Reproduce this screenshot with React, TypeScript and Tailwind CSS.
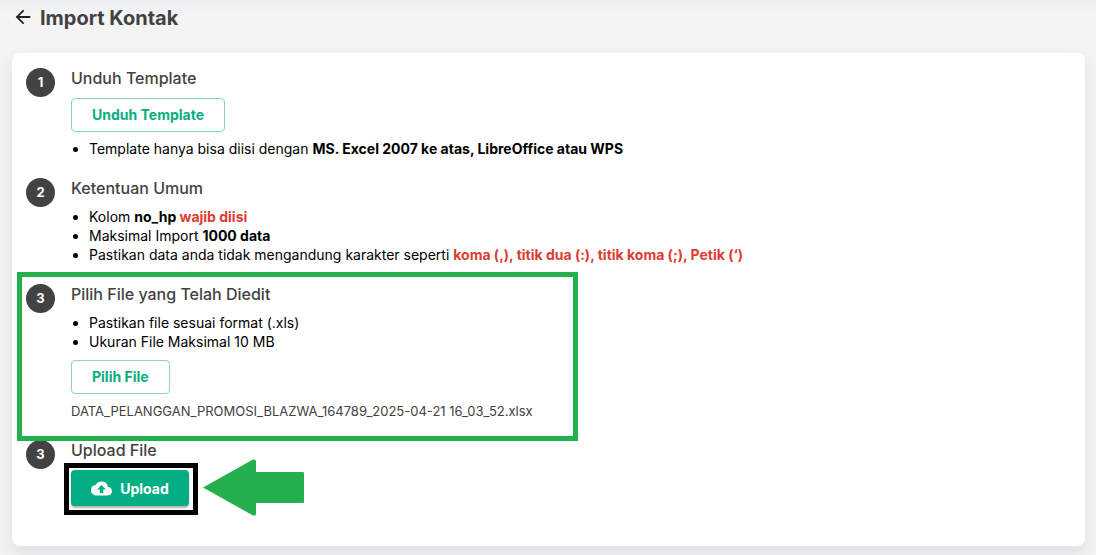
import React from 'react'
import { MdArrowBack, MdCloudUpload } from 'react-icons/md'

type StepProps = {
    number: number;
    title: string;
    children: React.ReactNode;
};

const Step: React.FC<StepProps> = ({ number, title, children }) => {
    return (
        <li className="relative flex gap-4 pb-[17px]">
            <span className="mt-0.5 flex size-[29px] shrink-0 items-center justify-center rounded-full bg-[#424242] text-[13px] font-bold text-white">
                {number}
            </span>
            <div className="flex min-w-0 flex-col items-start gap-2">
                <h2 className="text-[16px] leading-6 font-medium text-[#424242]">{title}</h2>
                {children}
            </div>
        </li>
    );
};

const Rules: React.FC<{ children: React.ReactNode }> = ({ children }) => {
    return <ul className="-mt-px list-disc pb-px pl-[18px] text-[14px] leading-[19px] text-black">{children}</ul>;
};

const OutlineButton: React.FC<{ children: React.ReactNode }> = ({ children }) => {
    return (
        <button type="button" className="h-[34px] rounded border border-[#82d7c1] bg-white px-5 pb-0.5 text-[14px] font-bold text-[#05ae82]">
            {children}
        </button>
    );
};

export default function App() {
    return (
        <div className="min-h-screen bg-[#f4f4f4] bg-linear-to-b from-[#ebedf0] to-[#f4f4f4] to-[14px] pr-[11px] pb-[9px] pl-3 font-['Inter',sans-serif]">
            <header className="flex h-[53px] items-start gap-1.5 pt-1.5">
                <a href="#kontak" aria-label="Kembali" className="text-[#222222]">
                    <MdArrowBack size={22} />
                </a>
                <h1 className="text-[20px] leading-6 font-bold text-[#424242]">Import Kontak</h1>
            </header>

            <main className="rounded-[8px] bg-white px-3.5 pt-[13px] pb-[23px] shadow-[0_8px_18px_rgba(60,75,90,0.12)]">
                <ol>
                    <Step number={1} title="Unduh Template">
                        <OutlineButton>Unduh Template</OutlineButton>
                        <Rules>
                            <li>Template hanya bisa diisi dengan <b>MS. Excel 2007 ke atas, LibreOffice atau WPS</b></li>
                        </Rules>
                    </Step>

                    <Step number={2} title="Ketentuan Umum">
                        <Rules>
                            <li>Kolom <b>no_hp <span className="text-[#dd3c30]">wajib diisi</span></b></li>
                            <li>Maksimal Import <b>1000 data</b></li>
                            <li>Pastikan data anda tidak mengandung karakter seperti <b className="text-[#dd3c30]">koma (,), titik dua (:), titik koma (;), Petik (‘)</b></li>
                        </Rules>
                    </Step>

                    <Step number={3} title="Pilih File yang Telah Diedit">
                        <Rules>
                            <li>Pastikan file sesuai format (.xls)</li>
                            <li>Ukuran File Maksimal 10 MB</li>
                        </Rules>
                        <OutlineButton>Pilih File</OutlineButton>
                        <p className="text-[13px] leading-[19px] text-[#424242]">DATA_PELANGGAN_PROMOSI_BLAZWA_164789_2025-04-21 16_03_52.xlsx</p>
                        {/* highlight frame */}
                        <div className="pointer-events-none absolute -top-2.5 -left-[9px] z-10 h-[169px] w-[561px] border-5 border-[#24b14d]" />
                    </Step>

                    <Step number={3} title="Upload File">
                        <div className="relative">
                            <button type="button" className="flex h-9 w-[118px] items-center justify-center gap-2 rounded bg-[#05ae82] text-[14px] font-bold text-white shadow-[0_2px_2px_rgba(0,0,0,0.3)]">
                                <MdCloudUpload size={21} />
                                Upload
                            </button>
                            <div className="pointer-events-none absolute -top-[7px] -left-[7px] h-[52px] w-[134px] border-5 border-black" />
                            <svg className="absolute -top-[11px] left-[132px]" width="101" height="57" viewBox="0 0 101 57" fill="#24b14d" aria-hidden="true">
                                <path d="M0 28.500 50 0.500Q53 0 53 2V13H100Q101 13 101 14V43Q101 44 100 44H53V55Q53 57 50 56.500Z" />
                            </svg>
                        </div>
                    </Step>
                </ol>
            </main>
        </div>
    );
}
